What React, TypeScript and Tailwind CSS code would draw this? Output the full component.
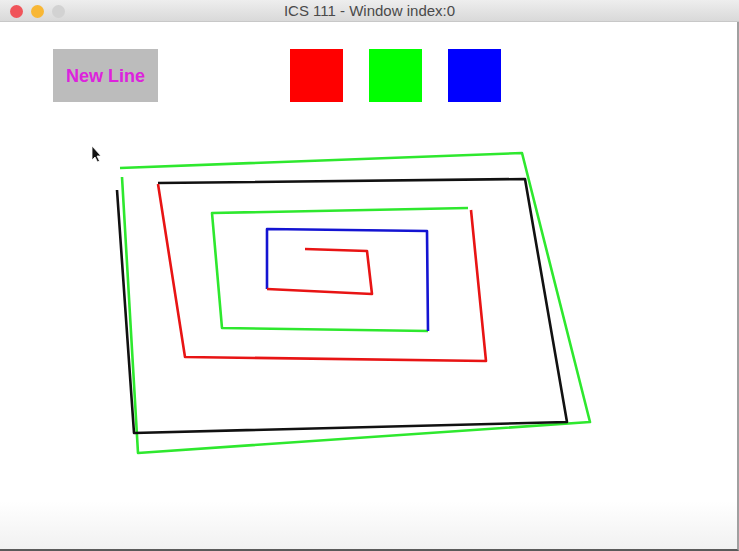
import type { ReactNode } from "react"

type Stroke = { color: string; points: [number, number][] }

// Lines drawn on the canvas, in window coordinates.
const STROKES: Stroke[] = [
  { color: "#2ee82e", points: [[120, 168], [522, 153], [590, 422], [138, 453], [122, 177]] },
  { color: "#111111", points: [[117, 190], [134, 433], [567, 422], [525, 179], [158, 183]] },
  { color: "#e81414", points: [[158, 184], [185, 357], [486, 361], [471, 210]] },
  { color: "#2ee82e", points: [[468, 208], [212, 213], [222, 328], [428, 331]] },
  { color: "#1414d2", points: [[428, 331], [427, 231], [267, 229], [267, 289]] },
  { color: "#e81414", points: [[267, 289], [372, 294], [367, 251], [305, 249]] },
]

function TrafficLight({ className }: { className: string }) {
  return <span className={`h-[13px] w-[13px] rounded-full ${className}`} />
}

function ColorSwatch({ className }: { className: string }) {
  return <div className={`h-[53px] w-[53px] ${className}`} />
}

function TitleBar({ children }: { children: ReactNode }) {
  return (
    <div className="relative flex h-[22px] items-center border-b border-[#c8c8c8] bg-gradient-to-b from-[#eeeeee] to-[#d9d9d9]">
      <div className="absolute left-[10px] top-[5px] flex gap-[8px]">
        <TrafficLight className="bg-[#f0545a]" />
        <TrafficLight className="bg-[#f8b735]" />
        <TrafficLight className="bg-[#d2d2d2]" />
      </div>
      <div className="flex-1 pt-[1px] text-center text-[15px] text-[#4a4a4a]">{children}</div>
    </div>
  )
}

export default function App() {
  return (
    <div
      className="flex h-[551px] w-[739px] flex-col overflow-hidden bg-white"
      style={{ fontFamily: '"Liberation Sans", Arial, sans-serif' }}
    >
      <TitleBar>ICS 111 - Window index:0</TitleBar>

      <div className="flex flex-1 flex-col border-b-[2px] border-r-[2px] border-b-[#5a5a5a] border-r-[#a0a0a0] bg-gradient-to-b from-white from-[91%] to-[#f1f1f1]">
        <div className="flex items-start pl-[53px] pt-[27px]">
          <button className="flex h-[53px] w-[105px] items-center justify-center bg-[#bcbcbc] pt-[1px] text-[18px] font-bold text-[#dd22dd]">
            New Line
          </button>
          <div className="ml-[132px] flex gap-[26px]">
            <ColorSwatch className="bg-[#ff0000]" />
            <ColorSwatch className="bg-[#00ff00]" />
            <ColorSwatch className="bg-[#0000ff]" />
          </div>
        </div>

        <svg className="flex-1" width="737" viewBox="0 102 737 446" preserveAspectRatio="xMinYMin meet">
          {STROKES.map((s, i) => (
            <polyline
              key={i}
              points={s.points.map((p) => p.join(",")).join(" ")}
              fill="none"
              stroke={s.color}
              strokeWidth={2.6}
              strokeLinejoin="round"
            />
          ))}
          {/* mouse pointer */}
          <path d="M92 146 L92 160 L95 157 L97.5 162 L99.5 161 L97 156 L101 156 Z" fill="#111" stroke="#fff" strokeWidth={0.8} />
        </svg>
      </div>
    </div>
  )
}
